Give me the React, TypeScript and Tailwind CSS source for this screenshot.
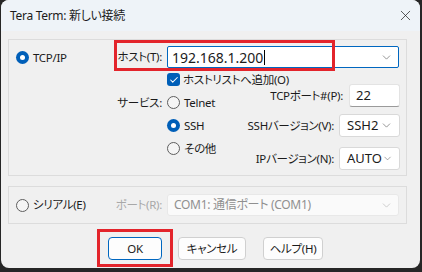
import { X, ChevronDown, Check } from "lucide-react"

const font =
  "font-['Noto_Sans','Noto_Sans_CJK_JP',sans-serif] [font-feature-settings:'palt'] text-[11.5px] tracking-[-0.3px] text-[#1b1b1b]"

function Radio({ checked, label, disabled }: { checked?: boolean; label: string; disabled?: boolean }) {
  return (
    <div className="flex items-center h-[17px] shrink-0">
      {checked ? (
        <span className="w-[13px] h-[13px] shrink-0 rounded-full bg-[#005fb8] flex items-center justify-center">
          <span className="w-[5px] h-[5px] rounded-full bg-white" />
        </span>
      ) : (
        <span className="w-[13px] h-[13px] shrink-0 rounded-full border border-[#5e5e5e] bg-[#f5f5f5]" />
      )}
      <span className={`ml-[4px] leading-none whitespace-nowrap ${disabled ? "text-[#a0a0a0]" : ""}`}>{label}</span>
    </div>
  )
}

function Select({ value, width }: { value: string; width: string }) {
  return (
    <div
      className={`${width} h-[23px] shrink-0 bg-white border border-[#d9d9d9] rounded-[3px] flex items-center justify-between pl-[7px] pr-[6px]`}
    >
      <span className="text-[13px] tracking-normal">{value}</span>
      <ChevronDown size={13} strokeWidth={1.2} className="text-[#5f5f5f]" />
    </div>
  )
}

export default function App() {
  return (
    <div className={`w-[422px] h-[272px] bg-[#262626] ${font}`}>
      <div className="relative w-[419px] h-[268px] ml-[1px] bg-[#f0f0f0] rounded-[8px] overflow-hidden flex flex-col">
        <div className="h-[31px] bg-[#eef3f8] flex items-center justify-between pl-[9px] pr-[6px] shrink-0">
          <span className="text-[12px] tracking-[-0.3px]">Tera Term: 新しい接続</span>
          <X size={17} strokeWidth={1} className="text-[#1b1b1b]" />
        </div>

        <div className="px-[7px] pt-[8px] flex flex-col">
          {/* TCP/IP group */}
          <div className="w-[399px] h-[137px] border border-[#dcdcdc] flex">
            <div className="w-[105px] shrink-0 pl-[7px] pt-[9px]">
              <Radio checked label="TCP/IP" />
            </div>
            <div className="w-[292px] shrink-0 flex flex-col pt-[6px]">
              <div className="flex items-center">
                <span className="w-[53px] shrink-0 pr-[5px] text-right whitespace-nowrap">ホスト(T):</span>
                <div className="w-[232px] h-[22px] shrink-0 bg-white border border-[#0067c0] rounded-[2px] flex items-center justify-between pl-[4px] pr-[5px]">
                  <span className="text-[14px] tracking-normal flex items-center">
                    192.168.1.200<span className="w-px h-[15px] bg-black ml-[1px]" />
                  </span>
                  <ChevronDown size={13} strokeWidth={1.2} className="text-[#5f5f5f]" />
                </div>
              </div>
              <div className="flex items-center h-[13px] mt-[5px] ml-[53px]">
                <span className="w-[13px] h-[13px] shrink-0 rounded-[3px] bg-[#005fb8] flex items-center justify-center">
                  <Check size={10} strokeWidth={2.5} className="text-white" />
                </span>
                <span className="ml-[3px] whitespace-nowrap">ホストリストへ追加(O)</span>
              </div>
              <div className="flex mt-[-2px]">
                <div className="w-[135px] shrink-0 flex pt-[10px]">
                  <span className="w-[53px] shrink-0 pr-[5px] h-[17px] flex items-center justify-end whitespace-nowrap">サービス:</span>
                  <div className="flex flex-col gap-[6px]">
                    <Radio label="Telnet" />
                    <Radio checked label="SSH" />
                    <Radio label="その他" />
                  </div>
                </div>
                <div className="flex-1 min-w-0 flex flex-col items-end pr-[6px]">
                  <div className="flex items-center gap-[6px]">
                    <span className="whitespace-nowrap">TCPポート#(P):</span>
                    <div className="w-[51px] h-[23px] shrink-0 bg-white border border-[#e3e3e3] border-b-[#9a9a9a] rounded-[3px] flex items-center pl-[6px] text-[13px] tracking-normal">
                      22
                    </div>
                  </div>
                  <div className="flex items-center gap-[5px] mt-[7px]">
                    <span className="whitespace-nowrap">SSHバージョン(V):</span>
                    <Select value="SSH2" width="w-[61px]" />
                  </div>
                  <div className="flex items-center gap-[5px] mt-[10px]">
                    <span className="whitespace-nowrap">IPバージョン(N):</span>
                    <Select value="AUTO" width="w-[61px]" />
                  </div>
                </div>
              </div>
            </div>
          </div>

          {/* Serial group */}
          <div className="w-[399px] h-[38px] border border-[#dcdcdc] mt-[10px] flex items-center">
            <div className="w-[105px] shrink-0 pl-[7px]">
              <Radio label="シリアル(E)" />
            </div>
            <span className="w-[53px] shrink-0 pr-[5px] text-right text-[#a8a8a8] whitespace-nowrap">ポート(R):</span>
            <div className="w-[232px] h-[22px] shrink-0 bg-[#fafafa] border border-[#e8e8e8] rounded-[3px] flex items-center justify-between pl-[6px] pr-[5px] text-[#909090]">
              <span className="text-[12px]">COM1: 通信ポート (COM1)</span>
              <ChevronDown size={13} strokeWidth={1.2} className="text-[#b5b5b5]" />
            </div>
          </div>

          {/* Buttons */}
          <div className="flex mt-[13px] ml-[100px] gap-[16px]">
            <div className="w-[54px] h-[23px] bg-[#fdfdfd] border border-[#0067c0] rounded-[4px] flex items-center justify-center">
              OK
            </div>
            <div className="w-[68px] h-[23px] bg-[#fdfdfd] border border-[#d0d0d0] rounded-[4px] flex items-center justify-center">
              キャンセル
            </div>
            <div className="w-[60px] h-[23px] bg-[#fdfdfd] border border-[#d0d0d0] rounded-[4px] flex items-center justify-center ml-[1px]">
              ヘルプ(H)
            </div>
          </div>
        </div>

        {/* red highlight overlays */}
        <div className="absolute left-[113px] top-[40px] w-[221px] h-[31px] border-[3px] border-[#e3242b]" />
        <div className="absolute left-[96px] top-[229px] w-[76px] h-[38px] border-[3px] border-[#e3242b]" />
      </div>
    </div>
  )
}
